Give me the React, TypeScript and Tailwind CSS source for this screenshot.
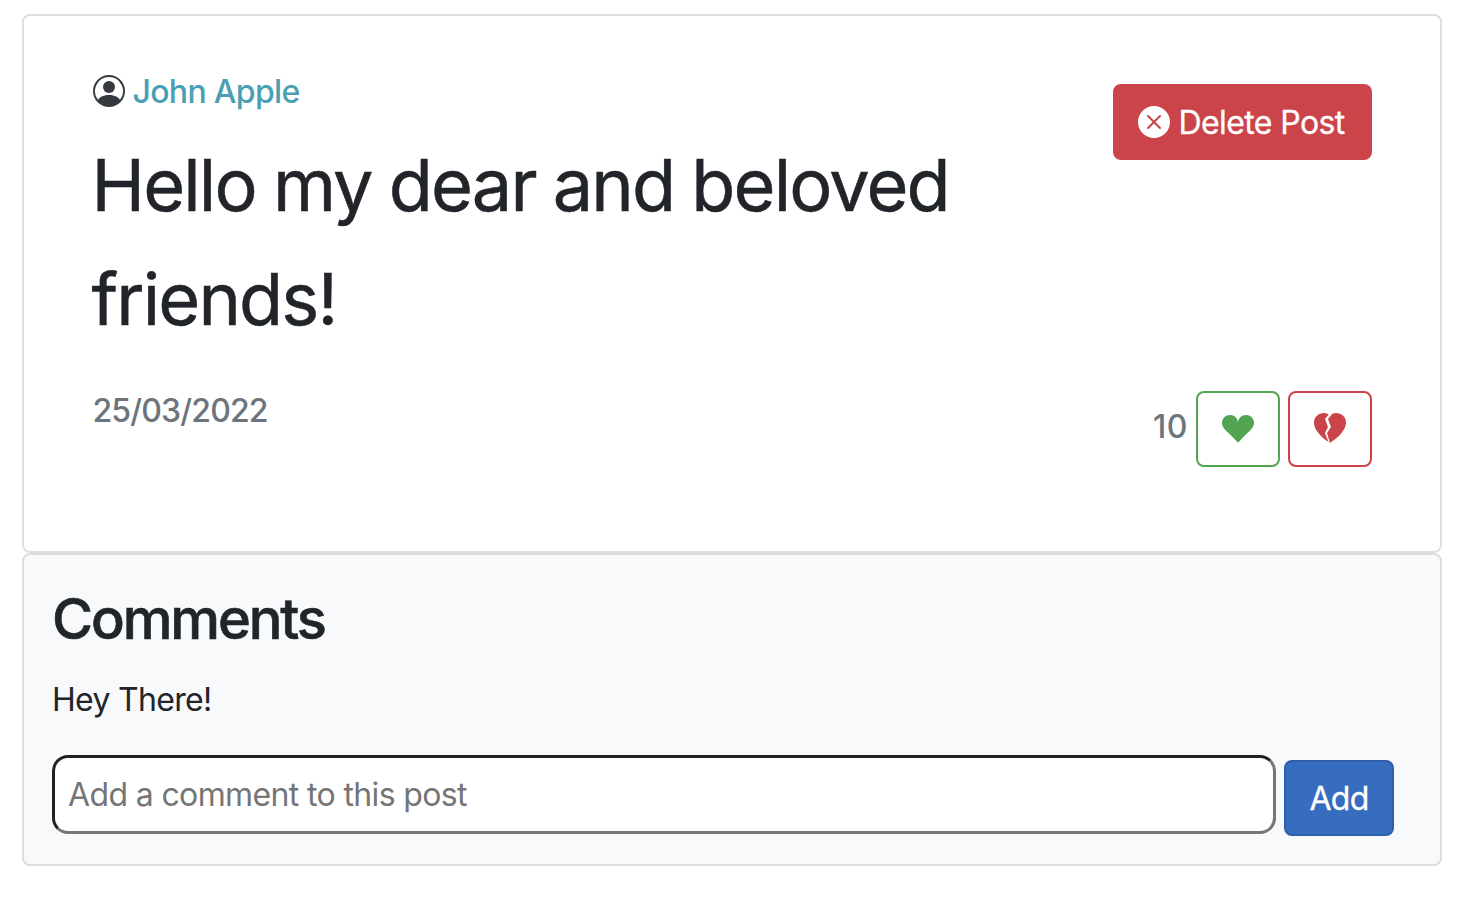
import React from "react";
import { BsPersonCircle, BsXCircleFill, BsHeartbreakFill, BsSuitHeartFill } from "react-icons/bs";

export default function App() {
  return (
    <main className="min-h-[902px] bg-white pl-[22px] pr-[18px] pt-[14px] font-['Inter',sans-serif] text-[32px] leading-[48px] tracking-[-0.68px] text-[#212529]">
      <section className="flex h-[539px] justify-between rounded-lg border-2 border-[#dfdfdf] bg-white pl-[68.5px] pr-[68px]">
        <div className="w-[900px] pt-[52px]">
          <div className="flex items-center gap-2">
            <BsPersonCircle className="-mt-0.5 size-8 text-[#343a40]" />
            <a className="font-medium text-[#4a9fb5]">John Apple</a>
          </div>
          <h1 className="-ml-[1px] mt-[12px] text-[72px] leading-[114px] tracking-[-1.85px] [word-spacing:-1.3px] [-webkit-text-stroke:0.5px_#212529]">Hello my dear and beloved friends!</h1>
          <p className="mt-[31px] font-medium tracking-[-0.85px] text-[#6c757d]">25/03/2022</p>
        </div>
        <div className="flex flex-col items-end pt-[68px]">
          <button className="flex h-[76px] w-[259px] items-center gap-2 rounded-lg bg-[#cb444a] pl-[25px] text-white">
            <BsXCircleFill className="size-8 shrink-0" />
            <span className="whitespace-nowrap pl-[0.5px] pt-[2px] tracking-[-0.6px] [-webkit-text-stroke:0.3px_white]">Delete Post</span>
          </button>
          <div className="mt-[231px] flex gap-2">
            <span className="pt-[12px] font-medium tracking-[0.5px] text-[#6c757d]">10</span>
            <button className="flex h-[76px] w-[84px] items-center justify-center rounded-lg border-2 border-[#53a451] pr-px text-[#53a451]">
              <BsSuitHeartFill className="size-8" />
            </button>
            <button className="flex h-[76px] w-[84px] items-center justify-center rounded-lg border-2 border-[#cb444a] pr-px text-[#cb444a]">
              <BsHeartbreakFill className="size-8" />
            </button>
          </div>
        </div>
      </section>
      <section className="h-[313px] rounded-lg border-2 border-[#dcdcdc] bg-[#f8f9fb] pl-[28px] pt-[31px]">
        <h2 className="text-[56px] font-medium leading-[67px] tracking-[-2.1px] [-webkit-text-stroke:0.6px_#212529]">Comments</h2>
        <p className="mt-[23px]">Hey There!</p>
        <div className="mt-[31px] flex gap-2">
          <input className="h-[79px] w-[1224px] rounded-[16px] border-[3px] border-b-[#767676] border-l-[#212121] border-r-[#767676] border-t-[#212121] bg-white px-[13px] tracking-[-0.63px] placeholder:text-[#757575]" placeholder="Add a comment to this post" />
          <button className="mt-[5px] h-[76px] w-[110px] rounded-lg border-2 border-[#2f5fab] bg-[#376dbe] pt-[2px] text-white [-webkit-text-stroke:0.3px_white]">Add</button>
        </div>
      </section>
    </main>
  );
}
